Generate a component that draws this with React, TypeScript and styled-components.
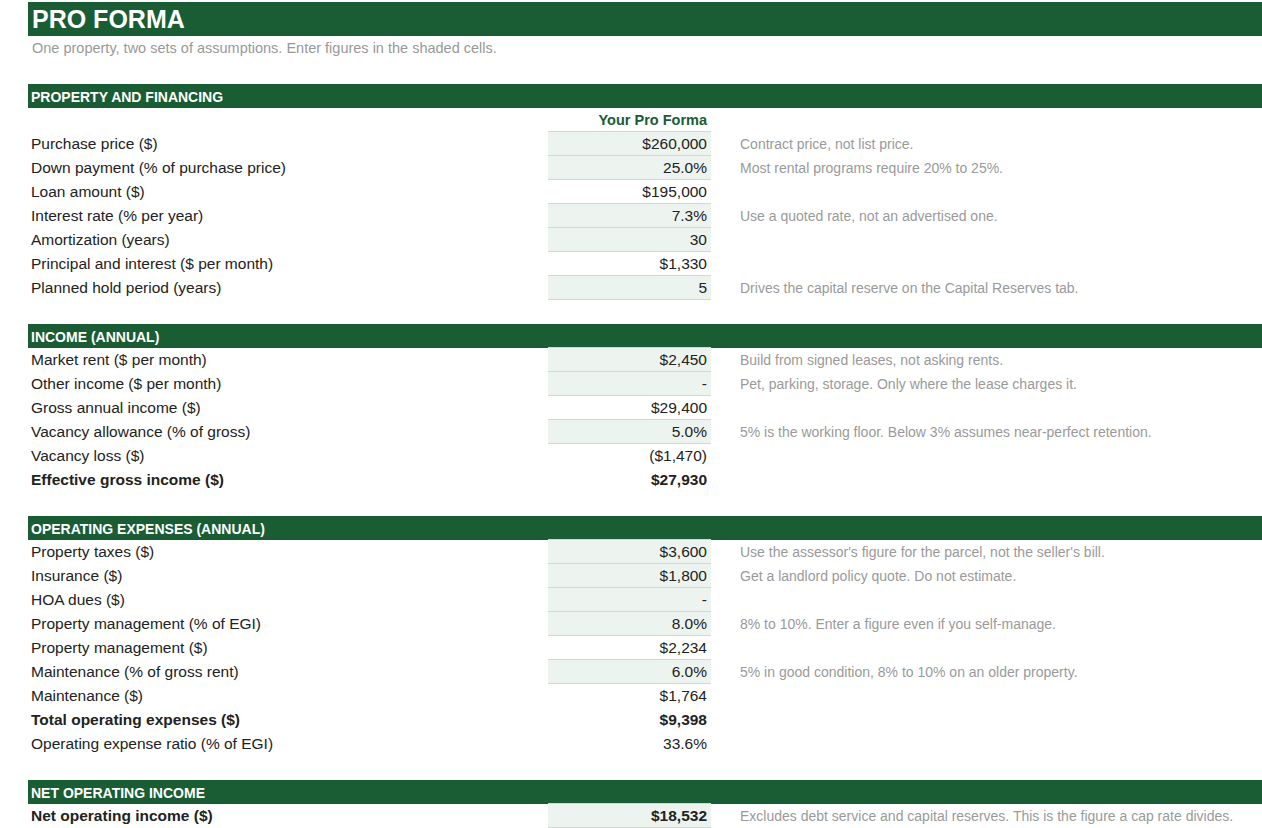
import React from "react";
import styled, { createGlobalStyle } from "styled-components";

const Global = createGlobalStyle`
  body { margin: 0; background: #fff; font-family: "Liberation Sans", Arial, sans-serif; }
`;
const GREEN = "#1a5c34";

const Page = styled.div`
  padding: 2px 0 0 28px;
  width: 1262px;
  box-sizing: border-box;
`;
const Title = styled.div`
  background: ${GREEN};
  color: #fff;
  font-weight: bold;
  font-size: 25px;
  height: 34px;
  line-height: 34px;
  padding-left: 4px;
`;
const Sub = styled.div`
  color: #999;
  font-size: 14.5px;
  height: 24px;
  line-height: 24px;
  padding-left: 4px;
`;
const Blank = styled.div`height: 24px;`;
const Section = styled.div`
  background: ${GREEN};
  color: #fff;
  font-weight: bold;
  font-size: 14px;
  height: 24px;
  line-height: 26px;
  padding-left: 3px;
`;
const Row = styled.div`
  display: grid;
  grid-template-columns: 520px 163px 1fr;
  height: 24px;
  line-height: 24px;
  font-size: 15.5px;
  color: #222;
`;
const Label = styled.div<{ $bold?: boolean }>`
  padding-left: 3px;
  font-weight: ${(p) => (p.$bold ? "bold" : "normal")};
`;
const Value = styled.div<{ $input?: boolean; $bold?: boolean; $head?: boolean }>`
  text-align: right;
  padding-right: 4px;
  box-sizing: border-box;
  background: ${(p) => (p.$input ? "#edf3ef" : "transparent")};
  border-bottom: 1px solid ${(p) => (p.$input || p.$head ? "#d4d8d5" : "transparent")};
  margin-top: ${(p) => (p.$input ? "-1px" : "0")};
  border-top: ${(p) => (p.$input ? "1px solid #d4d8d5" : "none")};
  height: ${(p) => (p.$input ? "25px" : "24px")};
  font-weight: ${(p) => (p.$bold || p.$head ? "bold" : "normal")};
  color: ${(p) => (p.$head ? GREEN : "#222")};
  font-size: ${(p) => (p.$head ? "14.5px" : "15.5px")};
`;
const Note = styled.div`
  color: #9a9a9a;
  font-size: 14px;
  padding-left: 29px;
  white-space: nowrap;
`;

type R = [string, string, boolean?, string?, boolean?];

const sections: { title: string; head?: boolean; rows: R[] }[] = [
  {
    title: "PROPERTY AND FINANCING",
    head: true,
    rows: [
      ["Purchase price ($)", "$260,000", true, "Contract price, not list price."],
      ["Down payment (% of purchase price)", "25.0%", true, "Most rental programs require 20% to 25%."],
      ["Loan amount ($)", "$195,000"],
      ["Interest rate (% per year)", "7.3%", true, "Use a quoted rate, not an advertised one."],
      ["Amortization (years)", "30", true],
      ["Principal and interest ($ per month)", "$1,330"],
      ["Planned hold period (years)", "5", true, "Drives the capital reserve on the Capital Reserves tab."],
    ],
  },
  {
    title: "INCOME (ANNUAL)",
    rows: [
      ["Market rent ($ per month)", "$2,450", true, "Build from signed leases, not asking rents."],
      ["Other income ($ per month)", "-", true, "Pet, parking, storage. Only where the lease charges it."],
      ["Gross annual income ($)", "$29,400"],
      ["Vacancy allowance (% of gross)", "5.0%", true, "5% is the working floor. Below 3% assumes near-perfect retention."],
      ["Vacancy loss ($)", "($1,470)"],
      ["Effective gross income ($)", "$27,930", false, undefined, true],
    ],
  },
  {
    title: "OPERATING EXPENSES (ANNUAL)",
    rows: [
      ["Property taxes ($)", "$3,600", true, "Use the assessor's figure for the parcel, not the seller's bill."],
      ["Insurance ($)", "$1,800", true, "Get a landlord policy quote. Do not estimate."],
      ["HOA dues ($)", "-", true],
      ["Property management (% of EGI)", "8.0%", true, "8% to 10%. Enter a figure even if you self-manage."],
      ["Property management ($)", "$2,234"],
      ["Maintenance (% of gross rent)", "6.0%", true, "5% in good condition, 8% to 10% on an older property."],
      ["Maintenance ($)", "$1,764"],
      ["Total operating expenses ($)", "$9,398", false, undefined, true],
      ["Operating expense ratio (% of EGI)", "33.6%"],
    ],
  },
  {
    title: "NET OPERATING INCOME",
    rows: [
      ["Net operating income ($)", "$18,532", true, "Excludes debt service and capital reserves. This is the figure a cap rate divides.", true],
    ],
  },
];

export default function App() {
  return (
    <Page>
      <Global />
      <Title>PRO FORMA</Title>
      <Sub>One property, two sets of assumptions. Enter figures in the shaded cells.</Sub>
      {sections.map((s, i) => (
        <React.Fragment key={s.title}>
          <Blank />
          <Section>{s.title}</Section>
          {s.head && (
            <Row>
              <Label />
              <Value $head>Your Pro Forma</Value>
              <Note />
            </Row>
          )}
          {s.rows.map(([l, v, inp, note, bold]) => (
            <Row key={l}>
              <Label $bold={bold}>{l}</Label>
              <Value $input={inp} $bold={bold}>{v}</Value>
              <Note>{note}</Note>
            </Row>
          ))}
        </React.Fragment>
      ))}
    </Page>
  );
}
